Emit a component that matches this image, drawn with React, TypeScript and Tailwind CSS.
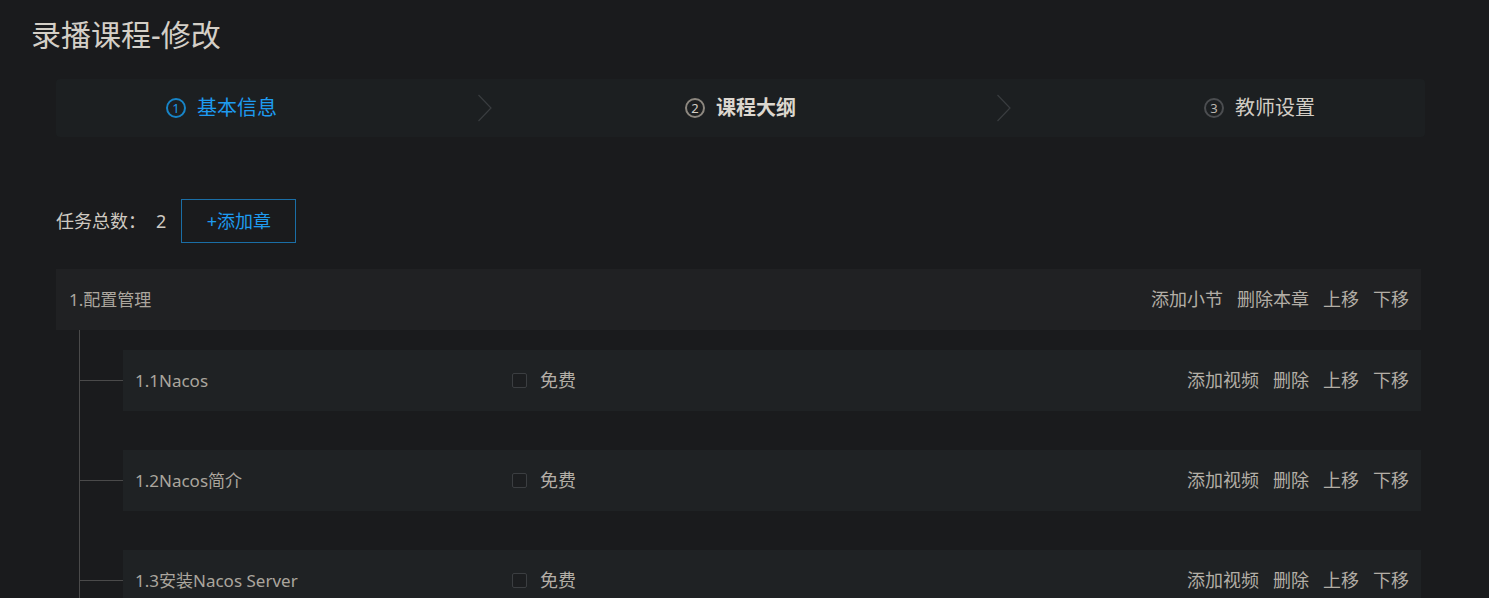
import React from 'react';

const FONT = { fontFamily: '"Noto Sans", "Noto Sans CJK SC", sans-serif' };

interface Step {
  num: string;
  label: string;
  state: 'done' | 'active' | 'todo';
}

const steps: Step[] = [
  { num: '1', label: '基本信息', state: 'done' },
  { num: '2', label: '课程大纲', state: 'active' },
  { num: '3', label: '教师设置', state: 'todo' }
];

const Chevron = () => (
  <svg width="16" height="28" viewBox="0 0 16 28" fill="none" className="shrink-0">
    <path d="M1.5 1 L14 14 L1.5 27" stroke="#393c3f" strokeWidth="1.2" />
  </svg>
);

const StepItem: React.FC<{ step: Step; last: boolean }> = ({ step, last }) => {
  const circleCls = {
    done: 'border-[#1784c7] text-[#1d97e6]',
    active: 'border-[#8c877f] text-[#d3cec6]',
    todo: 'border-[#4b4d50] text-[#bdb8b0]'
  }[step.state];
  const textCls = {
    done: 'text-[#1e9bf0]',
    active: 'text-[#dcd7cf] font-bold',
    todo: 'text-[#d2cdc5]'
  }[step.state];
  return (
    <div className={`flex items-center ${last ? '' : 'w-[519px] shrink-0'}`}>
      <span
        className={`flex h-[20px] w-[20px] items-center justify-center rounded-full border-2 text-[13px] leading-none ${circleCls}`}
      >
        {step.num}
      </span>
      <span className={`ml-[11px] text-[20px] leading-none ${textCls}`}>{step.label}</span>
      {!last && (
        <span className="ml-[200px]">
          <Chevron />
        </span>
      )}
    </div>
  );
};

interface Section {
  title: string;
}

const sections: Section[] = [
  { title: '1.1Nacos' },
  { title: '1.2Nacos简介' },
  { title: '1.3安装Nacos Server' }
];

const ActionLinks: React.FC<{ items: string[] }> = ({ items }) => (
  <div className="flex items-center gap-[14px] text-[18px] text-[#b3aea6]">
    {items.map((item) => (
      <span key={item} className="cursor-pointer">
        {item}
      </span>
    ))}
  </div>
);

const SectionRow: React.FC<{ section: Section }> = ({ section }) => (
  <div className="flex items-center">
    <div className="h-px w-[43px] bg-[#4a4a4a]" />
    <div className="flex h-[61px] flex-1 items-center bg-[#1f2224] pl-[12px] pr-[12px]">
      <span className="w-[377px] shrink-0 text-[17px] text-[#aba69e]">{section.title}</span>
      <span className="h-[15px] w-[15px] rounded-[2px] border border-[#3b3e41] bg-[#1c1e20]" />
      <span className="ml-[13px] text-[18px] text-[#b3aea6]">免费</span>
      <div className="flex-1" />
      <ActionLinks items={['添加视频', '删除', '上移', '下移']} />
    </div>
  </div>
);

export default function App() {
  return (
    <div className="min-h-screen bg-[#1a1b1d] pb-10" style={FONT}>
      <h1 className="pl-[31px] pt-[14px] text-[30px] leading-[42px] text-[#d4cfc7]">录播课程-修改</h1>

      <div className="ml-[56px] mr-[64px] mt-[23px] flex h-[58px] items-center overflow-hidden rounded-[4px] bg-[#1c1f21] pl-[110px]">
        {steps.map((s, i) => (
          <StepItem key={s.num} step={s} last={i === steps.length - 1} />
        ))}
      </div>

      <div className="ml-[56px] mr-[68px] mt-[62px]">
        <div className="flex items-center">
          <span className="text-[18px] text-[#cfcac2]">任务总数：</span>
          <span className="ml-[10px] text-[18px] text-[#cfcac2]">2</span>
          <button className="ml-[15px] h-[44px] w-[115px] border border-[#1a6ea6] text-[18px] text-[#1e9bf0]">
            +添加章
          </button>
        </div>

        <div className="mt-[26px] flex h-[61px] items-center justify-between bg-[#202123] pl-[13px] pr-[12px]">
          <span className="text-[17px] text-[#aba69e]">1.配置管理</span>
          <ActionLinks items={['添加小节', '删除本章', '上移', '下移']} />
        </div>

        <div className="ml-[23px] flex flex-col gap-[39px] border-l border-[#4a4a4a] pt-[20px]">
          {sections.map((s) => (
            <SectionRow key={s.title} section={s} />
          ))}
        </div>
      </div>
    </div>
  );
}
